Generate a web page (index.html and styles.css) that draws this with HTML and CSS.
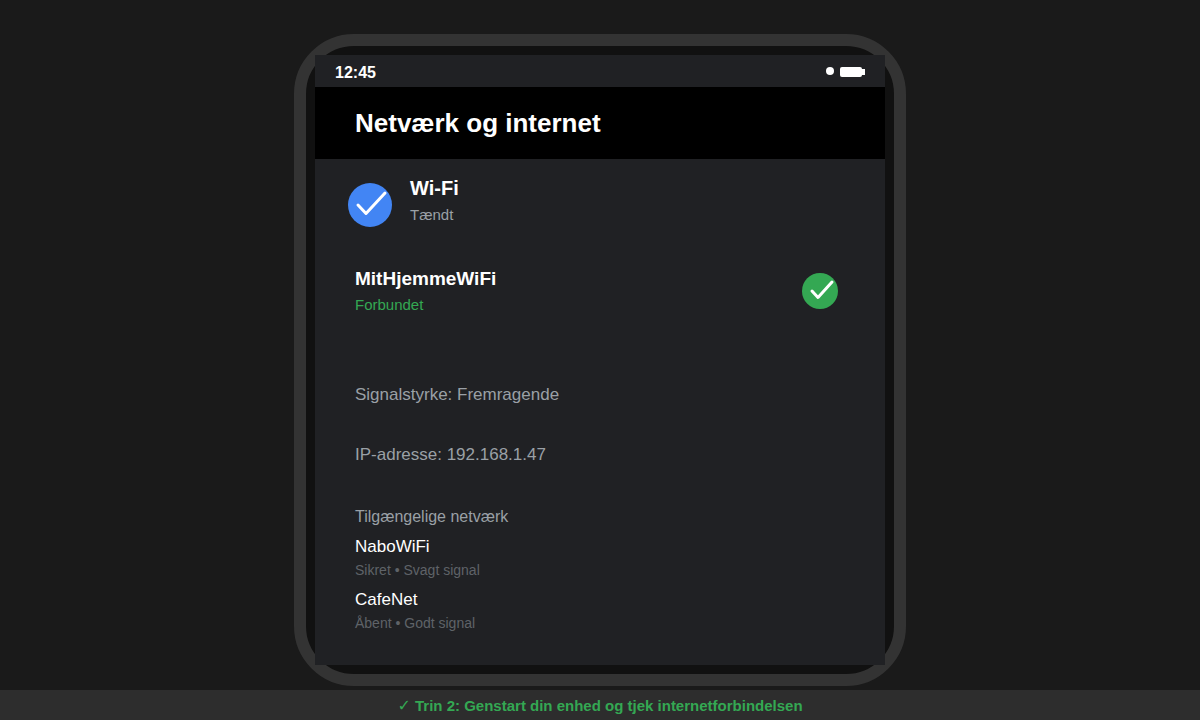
FILE: index.html
```html
<!DOCTYPE html>
<html lang="da">
<head>
<meta charset="utf-8">
<meta name="viewport" content="width=device-width, initial-scale=1">
<title>Netværk og internet</title>
<link rel="stylesheet" href="styles.css">
</head>
<body>

<main class="stage">
	<div class="phone">
		<div class="screen">

			<div class="statusbar">
				<span class="clock">12:45</span>
				<svg class="status-icons" width="39" height="10" viewBox="0 0 39 10">
					<circle cx="4" cy="4" r="4"/>
					<rect x="14" y="0" width="22" height="10" rx="2"/>
					<rect x="36" y="2" width="3" height="6"/>
				</svg>
			</div>

			<header class="titlebar">
				<h1>Netværk og internet</h1>
			</header>

			<div class="content">
				<!-- Wi-Fi -->
				<section class="wifi">
					<svg class="badge" width="44" height="44" viewBox="0 0 44 44">
						<circle cx="22" cy="22" r="22" fill="#4285f4"/>
						<path d="M10 22l8 8.500l19-20.500"/>
					</svg>
					<div>
						<h2>Wi-Fi</h2>
						<p class="state">Tændt</p>
					</div>
				</section>

				<!-- Forbundet netværk -->
				<section class="current">
					<div>
						<h2 class="ssid">MitHjemmeWiFi</h2>
						<p class="state connected">Forbundet</p>
					</div>
					<svg class="badge" width="36" height="36" viewBox="0 0 36 36">
						<circle cx="18" cy="18" r="18" fill="#34a853"/>
						<path d="M10 18l6 6.500l14-15.500"/>
					</svg>
				</section>

				<section class="details">
					<p>Signalstyrke: Fremragende</p>
					<p>IP-adresse: 192.168.1.47</p>
				</section>

				<!-- Andre netværk -->
				<section class="available">
					<h3>Tilgængelige netværk</h3>
					<ul>
						<li>
							<p class="name">NaboWiFi</p>
							<p class="info">Sikret • Svagt signal</p>
						</li>
						<li>
							<p class="name">CafeNet</p>
							<p class="info">Åbent • Godt signal</p>
						</li>
					</ul>
				</section>
			</div>

		</div>
	</div>
</main>

<footer class="step"><span class="tick">✓</span> Trin 2: Genstart din enhed og tjek internetforbindelsen</footer>

</body>
</html>
```
FILE: styles.css
```css
*{
	box-sizing: border-box;
}
body{
	margin: 0;
	min-height: 100vh;
	display: flex;
	flex-direction: column;
	background: #1a1a1a;
	color: #fff;
	font-family: "Liberation Sans", Arial, sans-serif;
}
h1,h2,h3,p,ul{
	margin: 0;
	padding: 0;
}
ul{
	list-style: none;
}

/* telefon */
.stage{
	flex: 1;
	display: flex;
	justify-content: center;
	padding: 34px 16px 4px;
}
.phone{
	display: flex;
	width: 100%;
	max-width: 612px;
	padding: 9px;
	border: 12px solid #333;
	border-radius: 60px;
	background: #111;
}
.screen{
	flex: 1;
	background: #202124;
}
.statusbar{
	display: flex;
	justify-content: space-between;
	align-items: flex-start;
	height: 32px;
	padding: 8px 20px 0;
}
.clock{
	font-size: 16px;
	line-height: 20px;
	font-weight: bold;
}
.status-icons{
	margin-top: 4px;
	fill: #fff;
}
.titlebar{
	padding: 20px 40px;
	background: #000;
}
h1{
	font-size: 26px;
	line-height: 32px;
}

/* indhold */
.content{
	padding: 17px 40px 20px;
}
.wifi,
.current{
	display: flex;
	align-items: flex-end;
}
.wifi{
	gap: 18px;
	margin-left: -7px;
}
.current{
	justify-content: space-between;
	margin-top: 40px;
	padding-right: 7px;
}
.badge path{
	fill: none;
	stroke: #fff;
	stroke-width: 3;
	stroke-linecap: round;
	stroke-linejoin: round;
}
.wifi > div{
	padding-bottom: 2px;
}
.current .badge{
	margin-bottom: 6px;
}
h2{
	font-size: 20px;
	line-height: 24px;
}
.ssid{
	font-size: 19px;
}
.state{
	margin-top: 5px;
	font-size: 15px;
	line-height: 20px;
	color: #9aa0a6;
}
.ssid + .state{
	margin-top: 4px;
}
.connected{
	color: #34a853;
}
.details{
	display: grid;
	gap: 40px;
	margin-top: 70px;
	font-size: 17px;
	line-height: 20px;
	color: #9aa0a6;
}
.available{
	margin-top: 42px;
}
h3{
	margin-bottom: 10px;
	font-size: 16px;
	line-height: 20px;
	font-weight: normal;
	color: #9aa0a6;
}
.available li{
	margin-bottom: 10px;
}
.name{
	font-size: 17px;
	line-height: 20px;
}
.info{
	margin-top: 3px;
	font-size: 14px;
	line-height: 20px;
	color: #5f6368;
}

/* trin */
.step{
	padding: 6px 16px 4px;
	background: #2d2d2d;
	color: #34a853;
	font-size: 15px;
	line-height: 20px;
	font-weight: bold;
	text-align: center;
}
.tick{
	font-family: "DejaVu Sans", sans-serif;
	font-size: 16px;
	line-height: 16px;
	font-weight: normal;
}
```
